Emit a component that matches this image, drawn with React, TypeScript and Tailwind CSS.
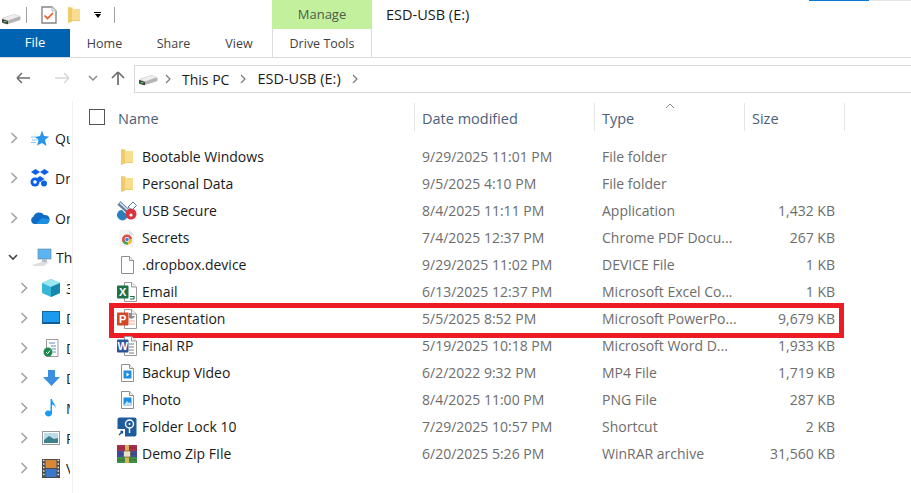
import type { ReactNode } from 'react';

// small hand drawn shell icons
const Svg = ({ w = 20, h = 20, children }: { w?: number; h?: number; children: ReactNode }) => (
	<svg width={w} height={h} viewBox={`0 0 ${w} ${h}`} className="block shrink-0">
		{children}
	</svg>
);

const DriveIcon = () => (
	<Svg w={20} h={14}>
		<path d="M1.5 7.5 Q1 7 3 6.5 L12 3.5 Q13 3 14.5 3.5 L18.5 5 Q19.5 5.5 19.5 6.5 V8 Q19.5 9 18 9.5 L7 13 Q6 13.5 4.5 13 L2 12 Q1 11.5 1 10.5 Z" fill="#b4b4b4" />
		<path d="M1.5 7.5 L7 9.5 L19 5.3 L13 3.2 Z" fill="#ededed" />
		<path d="M1 8 L7 10 V13.3 L2 12 Q1 11.5 1 10.5 Z" fill="#3f3f3f" />
		<rect x="2.5" y="10" width="3" height="1.3" fill="#57c457" />
	</Svg>
);

const ChecklistIcon = () => (
	<Svg w={16} h={18}>
		<path d="M1 1 H11 L15 5 V17 H1 Z" fill="#fff" stroke="#858585" strokeWidth="1.4" />
		<path d="M11 1 V5 H15" fill="#ededed" stroke="#bdbdbd" />
		<path d="M3.5 9.5 L6.5 12.5 L12 7" fill="none" stroke="#ea5a24" strokeWidth="1.7" />
	</Svg>
);

const FolderIcon = () => (
	<Svg w={14} h={18}>
		<path d="M1 1 L6 1.5 V3 H13 V15 H6 L1 17 Z" fill="#f9dd8e" />
		<path d="M1 1 L5 2 V15.5 L1 17 Z" fill="#f0cb6c" />
		<path d="M5 14 H13 V15 H5 Z" fill="#eecb70" />
	</Svg>
);

const BlankDoc = ({ children }: { children?: ReactNode }) => (
	<Svg w={15} h={18}>
		<path d="M1.5 0.5 H9.5 L13.5 4.5 V17.5 H1.5 Z" fill="#fff" stroke="#8f8f8f" />
		<path d="M9.5 0.5 V4.5 H13.5" fill="#f1f1f1" stroke="#8f8f8f" />
		{children}
	</Svg>
);

const UsbSecureIcon = () => (
	<Svg>
		<path d="M2 2 L15 14" stroke="#5f7f9f" strokeWidth="4.5" />
		<path d="M3 2 L14 12" stroke="#dfe8f0" strokeWidth="1.6" />
		<path d="M11 6 L16 1 L19.5 4.5 L15 9 Z" fill="#fff" stroke="#4a7fb0" />
		<path d="M5 9 A5 5 0 0 0 2 18 A5 5 0 0 0 9 18 L11 15 Z" fill="#2a7fc0" />
		<circle cx="14" cy="13" r="5.5" fill="#d9343f" />
		<circle cx="14" cy="14" r="1.6" fill="#fff" />
	</Svg>
);

const ChromeDocIcon = () => (
	<Svg w={16} h={18}>
		<path d="M0.5 1 H10 L15 6 V17.5 H0.5 Z" fill="#f3f3f3" />
		<path d="M10 1 V6 H15" fill="#e0e0e0" />
		<circle cx="8" cy="10.5" r="5" fill="#dd4b3e" />
		<path d="M8 10.5 L3.7 13 A5 5 0 0 0 9 15.4 Z" fill="#3da556" />
		<path d="M8 10.5 L13 10 A5 5 0 0 1 9 15.4 Z" fill="#f6c12c" />
		<circle cx="8" cy="10.5" r="2.4" fill="#fff" />
		<circle cx="8" cy="10.5" r="1.8" fill="#3f7fe0" />
	</Svg>
);

const OfficeIcon = ({ color, letter, variant }: { color: string; letter: string; variant: 'sheet' | 'slide' | 'word' }) => (
	<Svg>
		<path d="M7.5 0.5 H14.5 L19.5 5 V19.5 H7.5 Z" fill="#fff" stroke="#9a9a9a" />
		<path d="M14.5 0.5 V5 H19.5" fill="#f0f0f0" stroke="#9a9a9a" />
		{variant === 'sheet' && <path d="M13 17 H17 M13 14.5 H17 V17" fill="none" stroke={color} strokeWidth="1.2" />}
		{variant === 'slide' && (
			<>
				<path d="M12 4 H15 V7 H18 A4 4 0 0 1 12 9 Z" fill="#8c8c8c" />
				<path d="M12 12 H18 M12 15 H18" stroke="#e9a68f" strokeWidth="1.2" />
			</>
		)}
		{variant === 'word' && <path d="M12 8 H17 M12 11 H17 M12 14 H17 M12 17 H17" stroke="#7d7d7d" strokeWidth="1" />}
		<rect x="0" y="3.5" width="11.5" height="13" rx="1" fill={color} />
		<text x="5.7" y="14" textAnchor="middle" fontSize="11" fontWeight="700" fill="#fff" fontFamily="'Liberation Sans', sans-serif">
			{letter}
		</text>
	</Svg>
);

const MediaDoc = ({ kind }: { kind: 'video' | 'photo' }) => (
	<BlankDoc>
		<rect x="3.5" y="6.5" width="8" height="8" fill="#1f8de0" />
		{kind === 'video' ? (
			<path d="M6.5 8.5 L9.5 10.5 L6.5 12.5 Z" fill="#fff" />
		) : (
			<path d="M3.5 14.5 L7 10 L9 12 L10 11 L11.5 13 V14.5 Z" fill="#bfe3fb" />
		)}
	</BlankDoc>
);

const FolderLockIcon = () => (
	<Svg>
		<rect x="0.5" y="0.5" width="19" height="19" rx="2" fill="#1f5c9e" />
		<circle cx="12.5" cy="7" r="4" fill="none" stroke="#fff" strokeWidth="1.4" />
		<circle cx="12.5" cy="7" r="1" fill="#fff" />
		<path d="M12.5 11 V16" stroke="#fff" strokeWidth="1.4" />
		<rect x="0" y="12" width="8" height="8" fill="#fff" />
		<path d="M2 18 L5.5 14.5 M3.5 14.5 H5.5 V16.5" stroke="#1d4f8c" strokeWidth="1.3" fill="none" />
	</Svg>
);

const WinRarIcon = () => (
	<Svg>
		<rect x="0" y="1" width="20" height="6" fill="#a9304c" />
		<rect x="0" y="7" width="20" height="6" fill="#3f4fa0" />
		<rect x="0" y="13" width="20" height="6" fill="#3f8f45" />
		<path d="M0 4 H20 M0 10 H20 M0 16 H20" stroke="#000" strokeOpacity="0.2" />
		<rect x="8" y="1" width="4" height="18" fill="#d8b45a" />
		<rect x="6.5" y="7" width="7" height="6" fill="#e8e2c8" stroke="#5b4a20" strokeWidth="0.6" />
	</Svg>
);

const StarIcon = () => (
	<Svg w={18} h={17}>
		<path d="M11 0.5 L13 6 L18 6.5 L14 10 L15.5 16 L11 13 L6 15.5 L7.5 10 L4 7 L9 6 Z" fill="#2b95e9" />
		<path d="M0 7 H5 M1 10 H6 M0 12.5 H5" stroke="#8cc7f2" strokeWidth="1" />
	</Svg>
);

const DropboxIcon = () => (
	<Svg w={20} h={18}>
		<path d="M5.5 0 L10 3 L5.5 6 L1 3 Z M14.5 0 L19 3 L14.5 6 L10 3 Z M10 7 L14.5 10 L10 13 L5.5 10 Z" fill="#0a60e8" />
		<circle cx="5" cy="13" r="4.5" fill="#0a60e8" />
		<circle cx="5" cy="13" r="1.8" fill="#fff" />
		<circle cx="14" cy="14.5" r="3" fill="#0a60e8" />
	</Svg>
);

const CloudIcon = () => (
	<Svg w={20} h={14}>
		<path d="M4 13 A4 4 0 0 1 3.5 5.5 A6 6 0 0 1 14 4 A4.5 4.5 0 0 1 16 13 Z" fill="#0f6cc6" />
		<path d="M6 13 L12 7 L18.5 8 A3 3 0 0 1 16 13 Z" fill="#1d8fe0" />
	</Svg>
);

const PcIcon = () => (
	<Svg w={21} h={19}>
		<rect x="7" y="1" width="13" height="10" fill="#5ab4f2" stroke="#6a7f90" strokeWidth="0.6" />
		<path d="M11 11 H16 V14 H11 Z" fill="#b8bfc6" />
		<path d="M1 17 L11 14 H18 L13 18 H3 Z" fill="#dcdee0" />
	</Svg>
);

const CubeIcon = () => (
	<Svg w={18} h={18}>
		<path d="M9 0 L18 4 V14 L9 18 L0 14 V4 Z" fill="#38b6d6" />
		<path d="M9 0 L18 4 L9 8 L0 4 Z" fill="#9de7f2" />
		<path d="M9 8 L18 4 V14 L9 18 Z" fill="#1787ad" />
	</Svg>
);

const DesktopIcon = () => (
	<Svg w={18} h={14}>
		<rect x="0.5" y="0.5" width="17" height="12" fill="#1c9bee" stroke="#17649f" />
		<rect x="0.5" y="11" width="17" height="2" fill="#0e5c99" />
	</Svg>
);

const DocsIcon = () => (
	<Svg w={16} h={18}>
		<path d="M3.5 0.5 H15 V17.5 H3.5 Z" fill="#fff" stroke="#9a9a9a" />
		<path d="M6 4 H12 M8 7 H13 M9 10 H13 M10 13 H13" stroke="#5c8fc9" strokeWidth="1" />
		<circle cx="5" cy="13" r="4.5" fill="#1c8a4c" />
		<path d="M3 13 L4.6 14.6 L7 11.6" stroke="#fff" fill="none" strokeWidth="1" />
	</Svg>
);

const DownloadIcon = () => (
	<Svg w={17} h={16}>
		<path d="M5 0 H12 V7 H17 L8.5 16 L0 7 H5 Z" fill="#3b8ee0" />
	</Svg>
);

const MusicIcon = () => (
	<Svg w={12} h={18}>
		<path d="M5.5 0 H7 C7.5 4 11 5 10.5 9 C10 6.5 8.5 6 7 5.5 V14.5 A3.5 3 0 1 1 5.5 12 Z" fill="#1d9bf0" />
	</Svg>
);

const PictureIcon = () => (
	<Svg w={18} h={14}>
		<rect x="0.5" y="0.5" width="17" height="13" fill="#fff" stroke="#9a9a9a" />
		<rect x="2" y="2" width="14" height="10" fill="#bcdcea" />
		<path d="M2 9 L7 5 L12 8 L16 7 V12 H2 Z" fill="#3e7f8c" />
	</Svg>
);

const FilmIcon = () => (
	<Svg w={18} h={19}>
		<rect x="0" y="0" width="18" height="19" fill="#4a4a4a" />
		<rect x="3.5" y="1" width="11" height="8" fill="#d9883a" />
		<rect x="3.5" y="10" width="11" height="8" fill="#3b78c9" />
		<path d="M1 1.5 H2.5 M1 5 H2.5 M1 8.5 H2.5 M1 12 H2.5 M1 15.5 H2.5 M15.5 1.5 H17 M15.5 5 H17 M15.5 8.5 H17 M15.5 12 H17 M15.5 15.5 H17" stroke="#e6e6e6" strokeWidth="1.4" />
	</Svg>
);

const Chevron = ({ down = false }: { down?: boolean }) => (
	<svg width="10" height="12" viewBox="0 0 10 12" className="block shrink-0">
		{down ? (
			<path d="M1 4 L5 8 L9 4" fill="none" stroke="#444" strokeWidth="1.6" />
		) : (
			<path d="M2.5 1 L7.5 6 L2.5 11" fill="none" stroke="#a6a6a6" strokeWidth="1.7" />
		)}
	</svg>
);

const BarChevron = () => (
	<svg width="7" height="10" viewBox="0 0 7 10" className="block shrink-0">
		<path d="M1 1 L5 5 L1 9" fill="none" stroke="#7a7a7a" strokeWidth="1.2" />
	</svg>
);

const files = [
	{ name: 'Bootable Windows', date: '9/29/2025 11:01 PM', type: 'File folder', size: '', icon: <FolderIcon /> },
	{ name: 'Personal Data', date: '9/5/2025 4:10 PM', type: 'File folder', size: '', icon: <FolderIcon /> },
	{ name: 'USB Secure', date: '8/4/2025 11:11 PM', type: 'Application', size: '1,432 KB', icon: <UsbSecureIcon /> },
	{ name: 'Secrets', date: '7/4/2025 12:37 PM', type: 'Chrome PDF Docu...', size: '267 KB', icon: <ChromeDocIcon /> },
	{ name: '.dropbox.device', date: '9/29/2025 11:02 PM', type: 'DEVICE File', size: '1 KB', icon: <BlankDoc /> },
	{ name: 'Email', date: '6/13/2025 12:37 PM', type: 'Microsoft Excel Co...', size: '1 KB', icon: <OfficeIcon color="#1e7145" letter="X" variant="sheet" /> },
	{ name: 'Presentation', date: '5/5/2025 8:52 PM', type: 'Microsoft PowerPo...', size: '9,679 KB', icon: <OfficeIcon color="#d24726" letter="P" variant="slide" />, marked: true },
	{ name: 'Final RP', date: '5/19/2025 10:18 PM', type: 'Microsoft Word D...', size: '1,933 KB', icon: <OfficeIcon color="#2b579a" letter="W" variant="word" /> },
	{ name: 'Backup Video', date: '6/2/2022 9:32 PM', type: 'MP4 File', size: '1,719 KB', icon: <MediaDoc kind="video" /> },
	{ name: 'Photo', date: '8/4/2025 11:00 PM', type: 'PNG File', size: '287 KB', icon: <MediaDoc kind="photo" /> },
	{ name: 'Folder Lock 10', date: '7/29/2025 10:57 PM', type: 'Shortcut', size: '2 KB', icon: <FolderLockIcon /> },
	{ name: 'Demo Zip FIle', date: '6/20/2025 5:26 PM', type: 'WinRAR archive', size: '31,560 KB', icon: <WinRarIcon /> },
];

const navTop = [
	{ label: 'Quick access', icon: <StarIcon /> },
	{ label: 'Dropbox', icon: <DropboxIcon /> },
	{ label: 'OneDrive', icon: <CloudIcon /> },
];

const navPc = [
	{ label: '3D Objects', icon: <CubeIcon /> },
	{ label: 'Desktop', icon: <DesktopIcon /> },
	{ label: 'Documents', icon: <DocsIcon /> },
	{ label: 'Downloads', icon: <DownloadIcon /> },
	{ label: 'Music', icon: <MusicIcon /> },
	{ label: 'Pictures', icon: <PictureIcon /> },
	{ label: 'Videos', icon: <FilmIcon /> },
];

export default function App() {
	return (
		<div className="h-[493px] w-[911px] overflow-hidden bg-white font-['Open_Sans',sans-serif] text-[14px] text-[#1a1a1a]">
			{/* Title row */}
			<div className="relative flex h-[29px] items-center">
				<div className="ml-px mt-[7px]"><DriveIcon /></div>
				<div className="ml-[5px] h-[16px] w-px bg-[#a0a0a0]" />
				<div className="ml-[14px]"><ChecklistIcon /></div>
				<div className="ml-[10px]"><FolderIcon /></div>
				<div className="ml-[13px] flex flex-col items-center gap-[1px]">
					<div className="h-[1px] w-[7px] bg-black" />
					<div className="h-0 w-0 border-x-[3.5px] border-t-[4px] border-x-transparent border-t-black" />
				</div>
				<div className="ml-[13px] h-[16px] w-px bg-[#a0a0a0]" />
				<div className="ml-[157px] flex h-[29px] w-[100px] items-center justify-center bg-[#c3f09c] text-[13px] text-[#4c5c4c]">Manage</div>
				<div className="ml-[14px] text-[14.5px]">ESD-USB (E:)</div>
				<div className="absolute right-0 top-0 flex">
					<div className="h-px w-[60px] bg-[#0078d7]" />
					<div className="h-px w-[42px] bg-[#e5e5e5]" />
				</div>
			</div>
			{/* Ribbon tabs */}
			<div className="flex h-[29px] items-start border-b border-[#dadbdc] text-[12.5px] text-[#3f3f3f]">
				<div className="flex h-[28px] w-[70px] items-center justify-center bg-[#0063b1] text-[13px] text-white">File</div>
				<div className="flex h-[28px] w-[69px] items-center justify-center pt-[2px]">Home</div>
				<div className="flex h-[28px] w-[69px] items-center justify-center pt-[2px]">Share</div>
				<div className="flex h-[28px] w-[62px] items-center justify-center pt-[2px]">View</div>
				<div className="ml-[2px] flex h-[28px] w-[100px] items-center justify-center border-x border-[#dadbdc] pt-[2px]">Drive Tools</div>
			</div>
			{/* Address bar */}
			<div className="flex h-[35px] items-center pt-[7px]">
				<svg width="134" height="28" viewBox="0 0 134 28" className="block shrink-0">
					<path d="M17 13 H30 M17 13 L22 8 M17 13 L22 18" fill="none" stroke="#6d6d6d" strokeWidth="1.5" />
					<path d="M55 13 H69 M69 13 L64 8 M69 13 L64 18" fill="none" stroke="#d8d8d8" strokeWidth="1.5" />
					<path d="M89 11 L93 15 L97 11" fill="none" stroke="#8a8a8a" strokeWidth="1.5" />
					<path d="M118 20 V7 M118 7 L112 13 M118 7 L124 13" fill="none" stroke="#6d6d6d" strokeWidth="1.7" />
				</svg>
				<div className="flex h-[28px] flex-1 items-center border-y border-l border-[#d9d9d9] pl-[3px]">
					<DriveIcon />
					<div className="ml-[7px]"><BarChevron /></div>
					<span className="ml-[10px]">This PC</span>
					<div className="ml-[11px]"><BarChevron /></div>
					<span className="ml-[10px] text-[14.5px]">ESD-USB (E:)</span>
					<div className="ml-[11px]"><BarChevron /></div>
				</div>
			</div>
			<div className="flex h-[400px]">
				{/* Nav pane */}
				<div className="mt-[8px] w-[73px] shrink-0 overflow-hidden border-r border-[#f0f0f0] pt-[17px]">
					{navTop.map((item) => (
						<div key={item.label} className="flex h-[40px] items-center pl-[9px]">
							<Chevron />
							<div className="flex w-[36px] shrink-0 justify-center pl-[6px]">{item.icon}</div>
							<span className="w-[15px] overflow-hidden whitespace-nowrap">{item.label}</span>
						</div>
					))}
					<div className="mt-[4px] flex h-[30px] items-center pl-[8px]">
						<Chevron down />
						<div className="flex w-[38px] shrink-0 justify-center pl-[8px]"><PcIcon /></div>
						<span className="w-[16px] overflow-hidden whitespace-nowrap">This PC</span>
					</div>
					<div className="mt-px">
						{navPc.map((item) => (
							<div key={item.label} className="flex h-[30px] items-center pl-[19px]">
								<Chevron />
								<div className="flex w-[37px] shrink-0 justify-center pl-[7px]">{item.icon}</div>
								<span className="w-[4px] overflow-hidden whitespace-nowrap">{item.label}</span>
							</div>
						))}
					</div>
				</div>
				{/* File list */}
				<div className="flex-1">
					<div className="mt-[10px] flex h-[28px] items-center text-[14.5px] text-[#4c607a]">
						<div className="ml-[16px] h-[16px] w-[16px] border border-[#555]" />
						<div className="ml-[13px] flex h-full w-[297px] items-center border-r border-[#e5e5e5] pt-[3px]">Name</div>
						<div className="flex h-full w-[180px] items-center border-r border-[#e5e5e5] pl-[7px] pt-[3px]">Date modified</div>
						<div className="relative flex h-full w-[150px] items-center border-r border-[#e5e5e5] pl-[7px] pt-[3px]">
							Type
							<svg width="10" height="6" viewBox="0 0 10 6" className="absolute left-[70px] top-0">
								<path d="M1 5 L5 1 L9 5" fill="none" stroke="#8a8a8a" />
							</svg>
						</div>
						<div className="flex h-full w-[100px] items-center border-r border-[#e5e5e5] pl-[7px] pt-[3px]">Size</div>
					</div>
					<div className="mt-[12px]">
						{files.map((file) => (
							<div key={file.name} className="relative flex h-[27px] items-center pl-[44px]">
								<div className="flex w-[20px] shrink-0 justify-center">{file.icon}</div>
								<div className="ml-[5px] w-[280px]">{file.name}</div>
								<div className="w-[180px] text-[#6d6d6d]">{file.date}</div>
								<div className="w-[150px] text-[#6d6d6d]">{file.type}</div>
								<div className="w-[83px] text-right text-[#6d6d6d]">{file.size}</div>
								{file.marked && (
									<div className="absolute left-[36px] top-[-2px] h-[35px] w-[735px] border-[5px] border-[#ed1c24]" />
								)}
							</div>
						))}
					</div>
				</div>
			</div>
		</div>
	);
}
